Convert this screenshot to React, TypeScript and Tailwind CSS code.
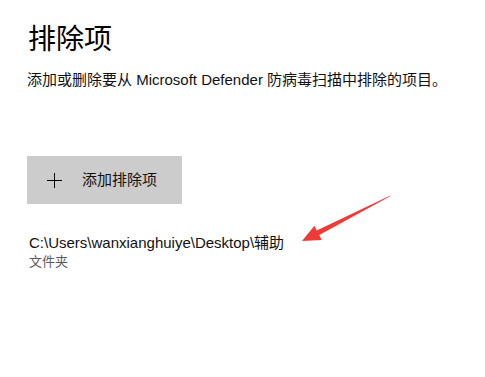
import React from "react";

export default function App() {
  const font = { fontFamily: '"Liberation Sans", "Noto Sans CJK SC", sans-serif' };
  return (
    <div className="relative w-[485px] h-[377px] bg-white overflow-hidden text-black" style={font}>
      <div className="pl-[27px] pt-[22px] flex flex-col items-start">
        <div className="ml-px text-[28px] leading-[36px] font-normal">排除项</div>
        <div className="mt-[12px] text-[15px] leading-[20px] text-[#111]">
          添加或删除要从 Microsoft Defender 防病毒扫描中排除的项目。
        </div>
        <button className="mt-[66px] w-[155px] h-[48px] bg-[#cccccc] flex items-center pl-[20px]">
          <svg width="15" height="15" viewBox="0 0 15 15" className="shrink-0">
            <path d="M7.5 0V15M0 7.5H15" stroke="#000" strokeWidth="1" />
          </svg>
          <span className="ml-[20px] text-[15px] leading-[20px] text-[#111]">添加排除项</span>
        </button>
        <div className="mt-[30px] ml-[2px] text-[15px] leading-[18px] text-[#111]">
          C:\Users\wanxianghuiye\Desktop\辅助
        </div>
        <div className="ml-[2px] text-[13px] leading-[20px] text-[#5a5a5a]">文件夹</div>
      </div>
      <svg className="absolute left-0 top-0 pointer-events-none" width="485" height="377">
        <polygon
          points="302,241 314.4,225.7 316.7,230.5 390.3,195.6 389.7,196.4 319.3,235 321.6,239.9"
          fill="#ef3b36"
        />
      </svg>
    </div>
  );
}
